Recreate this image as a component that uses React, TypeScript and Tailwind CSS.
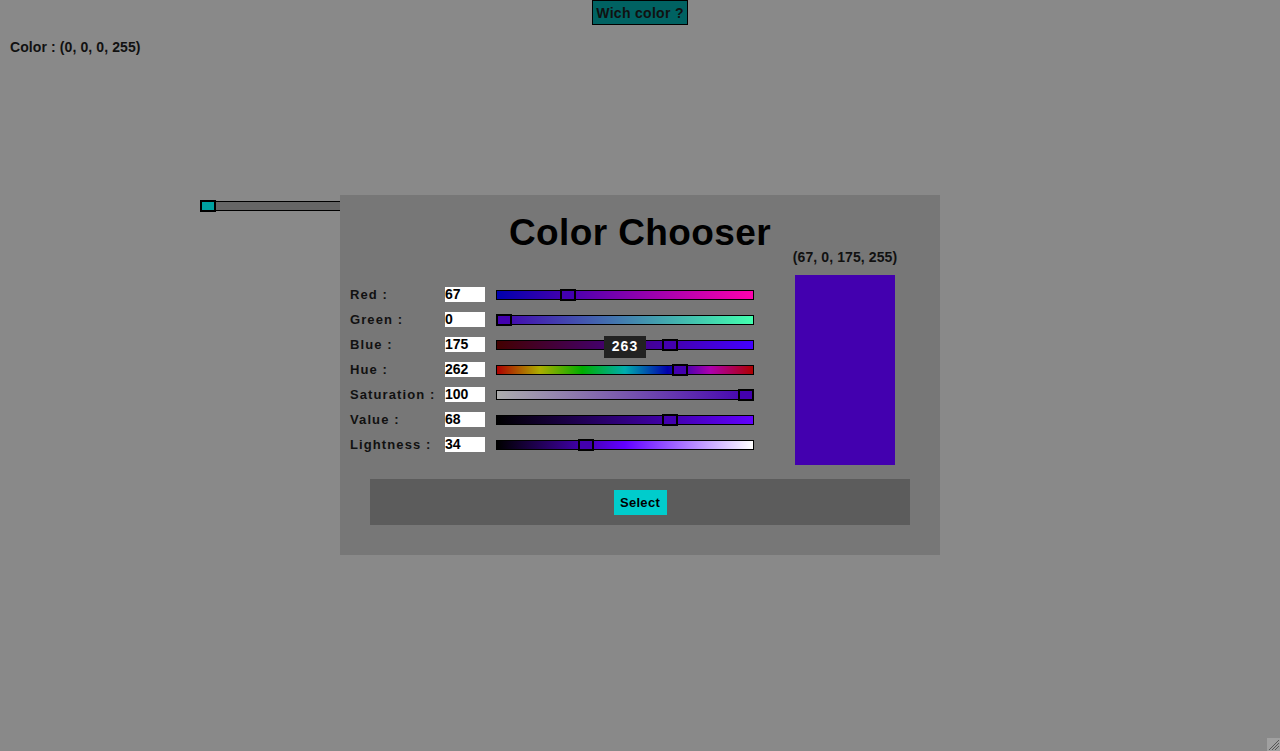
import React from "react";

type Row = {
  label: string;
  value: number;
  max: number;
  gradient: string;
};

const rows: Row[] = [
  { label: "Red :", value: 67, max: 255, gradient: "linear-gradient(to right, rgb(0,0,175), rgb(255,0,175))" },
  { label: "Green :", value: 0, max: 255, gradient: "linear-gradient(to right, rgb(67,0,175), rgb(67,255,175))" },
  { label: "Blue :", value: 175, max: 255, gradient: "linear-gradient(to right, rgb(67,0,0), rgb(67,0,255))" },
  {
    label: "Hue :",
    value: 262,
    max: 360,
    gradient:
      "linear-gradient(to right, rgb(173,0,0), rgb(173,173,0), rgb(0,173,0), rgb(0,173,173), rgb(0,0,173), rgb(173,0,173), rgb(173,0,0))",
  },
  { label: "Saturation :", value: 100, max: 100, gradient: "linear-gradient(to right, rgb(173,173,173), rgb(67,0,175))" },
  { label: "Value :", value: 68.6, max: 100, gradient: "linear-gradient(to right, rgb(0,0,0), rgb(98,0,255))" },
  { label: "Lightness :", value: 34, max: 100, gradient: "linear-gradient(to right, rgb(0,0,0), rgb(98,0,255), rgb(255,255,255))" },
];

const TRACK_W = 258;
const THUMB_W = 16;

function Slider({ row, tooltip }: { row: Row; tooltip?: string }) {
  const left = (row.value / row.max) * (TRACK_W - THUMB_W);
  return (
    <div className="relative w-[258px] h-[10px] border border-black" style={{ background: row.gradient }}>
      <div
        className="absolute top-[-2px] w-[16px] h-[12px] border-2 border-black bg-[#4300af]"
        style={{ left: left - 1 }}
      />
      {tooltip && (
        <div className="absolute left-[107px] top-[-5px] w-[42px] h-[22px] bg-[#222222] text-white text-[14px] font-bold tracking-[1px] flex items-center justify-center">
          {tooltip}
        </div>
      )}
    </div>
  );
}

export default function App() {
  return (
    <div
      className="relative w-[1280px] h-[751px] overflow-hidden bg-[#898989] text-[#111]"
      style={{ fontFamily: '"Liberation Sans", Arial, sans-serif' }}
    >
      <div className="flex justify-center">
        <button className="w-[96px] h-[25px] border border-black bg-[#006262] text-[14px] font-bold text-[#111] tracking-[0.3px] leading-none">
          Wich color ?
        </button>
      </div>
      <div className="pl-[10px] mt-[14px] text-[14px] font-bold leading-[16px] tracking-[0.1px]">Color : (0, 0, 0, 255)</div>

      {/* slider partly hidden by the dialog */}
      <div className="ml-[200px] mt-[146px] relative w-[300px] h-[10px] border border-black bg-[#666666]">
        <div className="absolute left-[-1px] top-[-2px] w-[16px] h-[12px] border-2 border-black bg-[#00a2a2]" />
      </div>

      {/* dialog */}
      <div className="absolute left-[340px] top-[195px] w-[600px] h-[360px] bg-[#777777] pt-[18px]">
        <div className="h-[40px] leading-[40px] text-center text-[37px] font-bold text-black tracking-[0.4px]">
          Color Chooser
        </div>
        <div className="flex mt-[-4px] pl-[10px]">
          <div className="pt-[33px] flex flex-col">
            {rows.map((row, i) => (
              <div key={row.label} className="h-[25px] flex items-center">
                <div className="w-[95px] text-[13px] font-bold tracking-[1.1px] text-[#111]">{row.label}</div>
                <div className="w-[40px] h-[15px] bg-white text-black text-[14px] font-bold leading-[15px] overflow-hidden">
                  {row.label === "Value :" ? 68 : row.value}
                </div>
                <div className="ml-[11px]">
                  <Slider row={row} tooltip={i === 2 ? "263" : undefined} />
                </div>
              </div>
            ))}
          </div>
          <div className="ml-[41px] w-[100px] flex flex-col items-center">
            <div className="h-[16px] leading-[16px] text-[14px] font-bold whitespace-nowrap tracking-[0.1px] text-[#111]">
              (67, 0, 175, 255)
            </div>
            <div className="mt-[10px] w-[100px] h-[190px] bg-[#4300af]" />
          </div>
        </div>
        <div className="mx-[30px] mt-[14px] h-[46px] bg-[#5c5c5c] flex justify-center pt-[11px]">
          <button className="w-[53px] h-[25px] bg-[#00cccc] text-[13px] font-bold text-black tracking-[0.3px]">
            Select
          </button>
        </div>
      </div>

      {/* resize grip */}
      <div className="absolute right-0 bottom-0 w-[13px] h-[13px] bg-[#a0a0a0]">
        <svg width="13" height="13" viewBox="0 0 13 13">
          <path d="M2 12 L12 2 M5 12 L12 5 M8 12 L12 8" stroke="#555" strokeWidth="1" fill="none" />
        </svg>
      </div>
    </div>
  );
}
